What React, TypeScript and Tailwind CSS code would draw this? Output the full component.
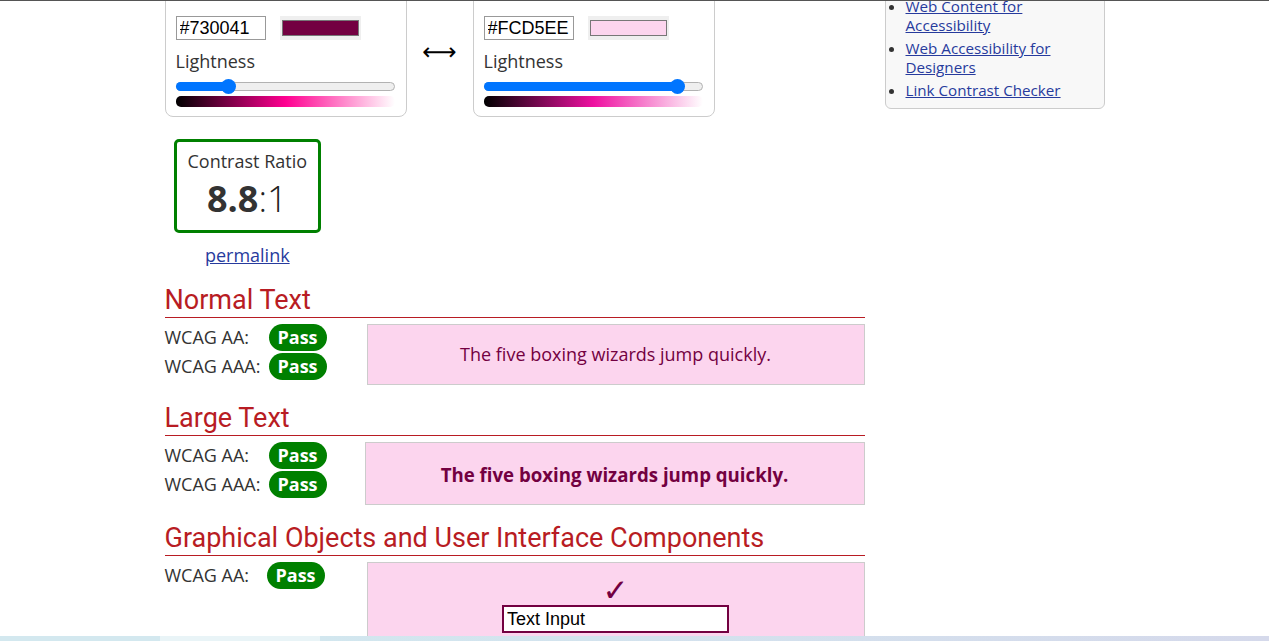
import React from "react";

type Side = {
  title: string;
  hex: string;
  lightness: number;
  hue: number;
  sat: number;
};

const sides: Side[] = [
  { title: "Foreground", hex: "#730041", lightness: 22.5, hue: 326, sat: 100 },
  { title: "Background", hex: "#FCD5EE", lightness: 91.2, hue: 321, sat: 87 },
];

function ColorCard({ side }: { side: Side }) {
  const thumbLeft = (side.lightness / 100) * (219 - 15);
  return (
    <div className="w-[242px] rounded-lg border border-[#ccc] px-[10px] pt-[9px] pb-[9px]">
      <div className="text-[18px] font-bold leading-[24px]">{side.title}</div>
      <div className="mt-[15px] flex items-center gap-[14px]">
        <input
          readOnly
          defaultValue={side.hex}
          className="h-[24px] w-[90px] border border-[#999] px-[3px] font-['Liberation_Sans',sans-serif] text-[18px] text-black outline-none"
        />
        <div className="h-[24px] w-[81px] bg-[#efefef] px-[2px] py-[4px]">
          <div className="h-full w-full border border-[#777]" style={{ backgroundColor: side.hex }} />
        </div>
      </div>
      <div className="mt-[9px] text-[18px] leading-[25px]">Lightness</div>
      <div className="relative mt-[5px] flex h-[15px] w-[219px] items-center">
        <div className="h-[9px] w-full rounded-full border border-[#b2b2b2] bg-[#efefef]" />
        <div
          className="absolute left-0 top-[3px] h-[9px] rounded-full bg-[#0075ff]"
          style={{ width: thumbLeft + 8 }}
        />
        <div
          className="absolute top-0 h-[15px] w-[15px] rounded-full bg-[#0075ff]"
          style={{ left: thumbLeft }}
        />
      </div>
      <div
        className="mt-[2px] h-[11px] w-[219px] rounded-[5px]"
        style={{
          background: `linear-gradient(to right, hsl(${side.hue},${side.sat}%,0%), hsl(${side.hue},${side.sat}%,50%), hsl(${side.hue},${side.sat}%,100%))`,
        }}
      />
    </div>
  );
}

function Pass() {
  return (
    <span className="rounded-full bg-[#008000] px-[9px] text-[18px] font-bold leading-[27px] text-white">
      Pass
    </span>
  );
}

function Row({ label, w }: { label: string; w: string }) {
  return (
    <div className="flex items-center">
      <span className={`${w} text-[18px] leading-[27px]`}>{label}</span>
      <Pass />
    </div>
  );
}

function Heading({ children, top }: { children: React.ReactNode; top: string }) {
  return (
    <h2
      className={`${top} border-b border-[#b81c23] pb-[4px] font-['Roboto',sans-serif] text-[27px] leading-[26px] text-[#b81c23]`}
    >
      {children}
    </h2>
  );
}

export default function App() {
  return (
    <div className="relative h-[641px] overflow-hidden bg-white font-['Open_Sans',sans-serif] text-[#333]">
      <div className="mx-auto -mt-[33px] flex w-[940px] gap-5">
        <main className="w-[700px]">
          <div className="flex items-start">
            <ColorCard side={sides[0]} />
            <div className="mt-[70px] flex w-[66px] justify-center font-['DejaVu_Sans',sans-serif] text-[24px] leading-[30px] text-black">
              ⟷
            </div>
            <ColorCard side={sides[1]} />
          </div>

          <div className="ml-[9px] mt-[22px] inline-flex flex-col items-center">
            <div className="rounded-[5px] border-[3px] border-[#008000] px-[11px] pt-[7px] pb-[9px] text-center">
              <div className="text-[18px] leading-[25px]">Contrast Ratio</div>
              <div className="mt-[3px] text-[36px] leading-[44px]">
                <b>8.8</b>
                <span className="font-light text-[#222]">:1</span>
              </div>
            </div>
            <a href="#" className="mt-[10px] text-[18px] leading-[25px] text-[#273b9d] underline">
              permalink
            </a>
          </div>

          <Heading top="mt-[19px]">Normal Text</Heading>
          <div className="mt-[6px] flex items-start">
            <div className="flex w-[202px] flex-col gap-[2px]">
              <Row label="WCAG AA:" w="w-[104px]" />
              <Row label="WCAG AAA:" w="w-[104px]" />
            </div>
            <div className="flex-1 border border-[#ccc] bg-[#fcd5ee] py-[17px] text-center text-[18px] leading-[25px] text-[#730041]">
              The five boxing wizards jump quickly.
            </div>
          </div>

          <Heading top="mt-[20px]">Large Text</Heading>
          <div className="mt-[6px] flex items-start">
            <div className="flex w-[200px] flex-col gap-[2px]">
              <Row label="WCAG AA:" w="w-[104px]" />
              <Row label="WCAG AAA:" w="w-[104px]" />
            </div>
            <div className="flex-1 border border-[#ccc] bg-[#fcd5ee] pt-[18px] pb-[16px] text-center text-[18.67px] font-bold leading-[27px] text-[#730041]">
              The five boxing wizards jump quickly.
            </div>
          </div>

          <Heading top="mt-[20px]">Graphical Objects and User Interface Components</Heading>
          <div className="mt-[6px] flex items-start">
            <div className="w-[202px]">
              <Row label="WCAG AA:" w="w-[102px]" />
            </div>
            <div className="flex flex-1 flex-col items-center border border-[#ccc] bg-[#fcd5ee] pt-[12px] pb-[30px]">
              <div className="font-['DejaVu_Sans',sans-serif] text-[31px] font-bold leading-[30px] text-[#730041]">✓</div>
              <input
                readOnly
                defaultValue="Text Input"
                className="h-[28px] w-[227px] border-2 border-[#730041] bg-white px-[3px] font-['Liberation_Sans',sans-serif] text-[18px] text-black outline-none"
              />
            </div>
          </div>
        </main>

        <aside className="w-[220px]">
          <div className="rounded-md border border-[#ccc] bg-[#f8f8f8] pt-[29px] pb-[8px] pl-[20px] pr-[8px]">
            <ul className="list-disc text-[15.2px] leading-[19px]">
              <li>
                <a href="#" className="text-[#273b9d] underline">
                  Web Content for Accessibility
                </a>
              </li>
              <li className="mt-[4px]">
                <a href="#" className="text-[#273b9d] underline">
                  Web Accessibility for Designers
                </a>
              </li>
              <li className="mt-[4px]">
                <a href="#" className="text-[#273b9d] underline">
                  Link Contrast Checker
                </a>
              </li>
            </ul>
          </div>
        </aside>
      </div>

      <div className="absolute inset-x-0 top-0 h-px bg-[#555]" />
      <div className="absolute inset-x-0 bottom-0 flex h-[5px]">
        <div className="w-[160px] bg-[#d3e8ef]" />
        <div className="w-[160px] bg-[#e9f4f7]" />
        <div className="flex-1 bg-gradient-to-r from-[#d2e7ef] to-[#d5d9eb]" />
      </div>
    </div>
  );
}
